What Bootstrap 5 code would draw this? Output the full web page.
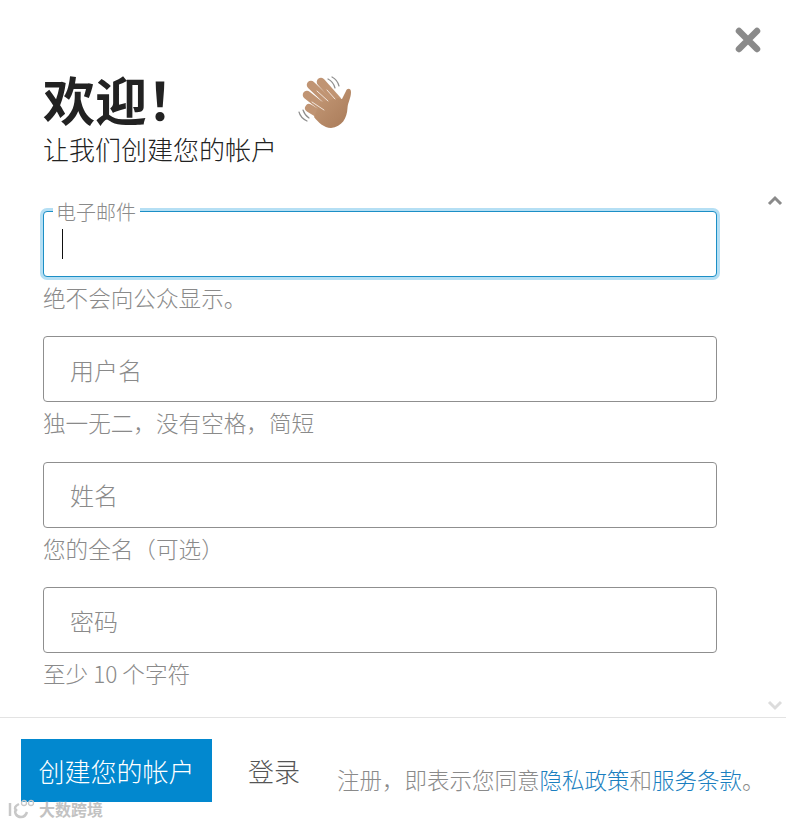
<!DOCTYPE html>
<html lang="zh-CN">
<head>
<meta charset="utf-8">
<title>欢迎</title>
<link href="https://cdn.jsdelivr.net/npm/bootstrap@5.3.0/dist/css/bootstrap.min.css" rel="stylesheet">
<style>
html,body{height:100%;overflow:hidden;background:#fff}
body{font-family:"Noto Sans CJK SC","Liberation Sans",sans-serif;color:#222}
.sheet{height:825px;width:786px}
.top-bar{height:69px;padding:27px 25px 0 0}
.close-x{display:block;background:none;border:0;padding:0;line-height:0;height:26px}
.head-area{padding-left:43px;height:142px}
.title-row{height:62px}
.title-txt{font-size:52px;line-height:60px;font-weight:700;width:252px;color:#222;margin:0}
.hand{width:60px;height:60px;margin-top:5px;margin-left:-1px}
.sub-txt{font-size:26px;line-height:36px;font-weight:300;margin:0;color:#222}
.scroll-area{padding-left:43px;position:relative}
.field-box{width:674px;margin-bottom:21.4px;position:relative}
.field-box .form-control{height:66px;border:1px solid #8f8f8f;border-radius:4px;padding:0 26px;font-size:24px;font-weight:300;color:#222;box-shadow:none}
.field-box .form-control::placeholder{color:#8a8a8a;opacity:1}
.field-box .form-control.is-on{border-color:#1c8fc6;box-shadow:0 0 0 3px #b5dff4}
.float-lab{position:absolute;left:10px;top:-13px;background:#fff;padding:0 4px 0 3px;font-size:20px;line-height:28px;font-weight:300;color:#8a8a8a;z-index:2}
.fake-caret{position:absolute;left:19px;top:18px;width:1px;height:30px;background:#111;z-index:2}
.hint-txt{font-size:22.6px;line-height:34px;margin-top:4px;font-weight:300;color:#8a8a8a}
.scroll-up,.scroll-down{position:absolute;left:767px;line-height:0}
.scroll-up{top:-17px}
.scroll-down{top:488px}
.foot-area{height:108px;border-top:1px solid #e3e3e3;margin-top:auto;padding:21px 0 0 21px;position:relative}
.go-btn{width:191px;height:63px;background:#0288cf;border:0;border-radius:0;color:#fff;font-size:26px;font-weight:300;padding:0;line-height:1}
.go-btn:hover{background:#0288cf;color:#fff}
.login-lnk{font-size:26px;font-weight:300;color:#555;text-decoration:none;margin-left:36px;line-height:63px}
.terms-txt{font-size:22.5px;font-weight:300;color:#8a8a8a;margin-left:37px;line-height:32px;padding-top:24px;white-space:nowrap}
.terms-txt a{color:#1b7fc0;text-decoration:none}
.wm{position:absolute;left:7px;top:81px;color:#c2c2c2;font-size:16px;font-weight:700;line-height:20px;gap:4px;text-shadow:0 0 2px #fff}
</style>
</head>
<body>
<div class="sheet d-flex flex-column">
  <div class="top-bar d-flex justify-content-end">
    <button class="close-x" type="button" aria-label="关闭">
      <svg width="26" height="26" viewBox="0 0 26 26"><path d="M4 4L22 22M22 4L4 22" stroke="#8a8a8a" stroke-width="6.5" stroke-linecap="round" fill="none"/></svg>
    </button>
  </div>
  <div class="head-area">
    <div class="title-row d-flex align-items-start">
      <h1 class="title-txt">欢迎！</h1>
      <svg class="hand" viewBox="10 10 60 60">
        <defs><linearGradient id="skin" x1="0" y1="0" x2="1" y2="1"><stop offset="0" stop-color="#c59a78"/><stop offset="1" stop-color="#a87a58"/></linearGradient></defs>
        <g stroke="#c09473" stroke-linecap="round" fill="none">
          <path d="M37 18L53 36" stroke-width="8.5"/>
          <path d="M27 21L46 39" stroke-width="8.5"/>
          <path d="M23 31L42 46" stroke-width="8.5"/>
          <path d="M25 44L38 52" stroke-width="8"/>
        </g>
        <path d="M36 38L54 34L58 35L62 27C63 24 67 24 67 28C67 34 64 38 63.5 44C63 54 58 63 47 64C40 64 34 58 30 53Z" fill="url(#skin)"/>
        <g stroke="#f6ede6" stroke-width=".9" stroke-linecap="round" fill="none">
          <path d="M43 26L51 35"/><path d="M33 27L44 37"/><path d="M28 38L40 46"/>
        </g>
        <g stroke="#8e8e8e" stroke-width="1.2" stroke-linecap="round" fill="none">
          <path d="M44 15C48 17 50 20 51 24"/><path d="M48 13C52 15 54 18 55 22"/>
          <path d="M15 48C16 52 19 55 23 57"/><path d="M19 46C20 49 22 52 25 54"/>
        </g>
      </svg>
    </div>
    <p class="sub-txt">让我们创建您的帐户</p>
  </div>
  <div class="scroll-area">
    <div class="scroll-up"><svg width="16" height="12" viewBox="0 0 16 12"><path d="M2 10L8 4L14 10" stroke="#8a8a8a" stroke-width="3" fill="none"/></svg></div>
    <div class="field-box">
      <label class="float-lab" for="f-mail">电子邮件</label>
      <span class="fake-caret"></span>
      <input id="f-mail" class="form-control is-on" type="text">
      <div class="hint-txt">绝不会向公众显示。</div>
    </div>
    <div class="field-box">
      <input class="form-control" type="text" placeholder="用户名">
      <div class="hint-txt">独一无二，没有空格，简短</div>
    </div>
    <div class="field-box">
      <input class="form-control" type="text" placeholder="姓名">
      <div class="hint-txt">您的全名（可选）</div>
    </div>
    <div class="field-box mb-0">
      <input class="form-control" type="password" placeholder="密码">
      <div class="hint-txt">至少 10 个字符</div>
    </div>
    <div class="scroll-down"><svg width="16" height="12" viewBox="0 0 16 12"><path d="M2 3L8 9L14 3" stroke="#dcdcdc" stroke-width="3" fill="none"/></svg></div>
  </div>
  <div class="foot-area d-flex align-items-start">
    <button class="btn go-btn" type="button">创建您的帐户</button>
    <a class="login-lnk" href="#">登录</a>
    <div class="terms-txt">注册，即表示您同意<a href="#">隐私政策</a>和<a href="#">服务条款</a>。</div>
    <div class="wm d-flex align-items-center">
      <svg width="28" height="20" viewBox="0 0 28 20"><g fill="none" stroke="#c8c8c8"><path d="M3 4V17" stroke-width="2.5"/><path d="M12 5C8 7 7 9 9 11C7 13 9 18 14 18C17 18 19 16 20 13" stroke-width="2.5"/><circle cx="17" cy="4" r="2.5" stroke-width="1.3"/><circle cx="24" cy="4" r="2.5" stroke-width="1.3"/></g></svg>
      <span>大数跨境</span>
    </div>
  </div>
</div>
<script src="https://cdn.jsdelivr.net/npm/bootstrap@5.3.0/dist/js/bootstrap.bundle.min.js"></script>
</body>
</html>
